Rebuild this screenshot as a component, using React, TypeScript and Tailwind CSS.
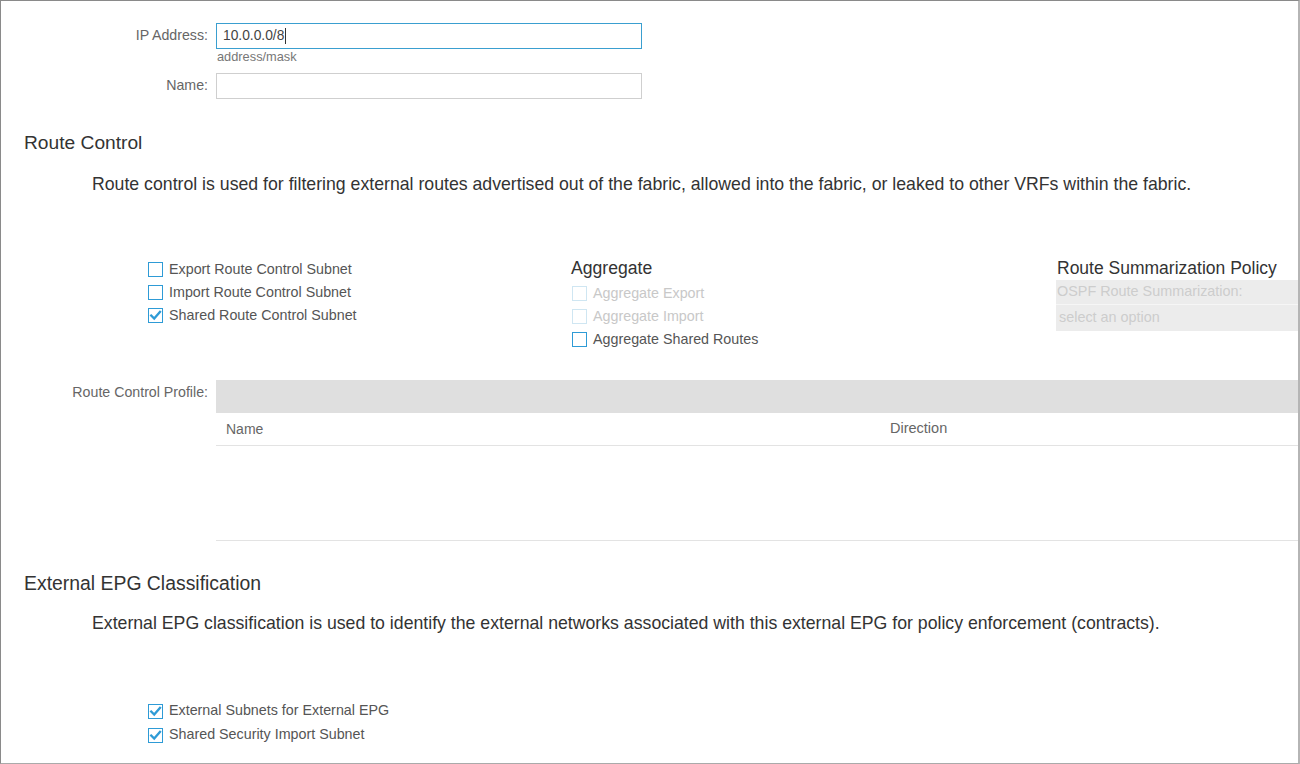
import React from "react";

function Box({ checked, disabled }: { checked?: boolean; disabled?: boolean }) {
  return (
    <span
      className={`inline-flex w-[15px] h-[15px] shrink-0 items-center justify-center border bg-white ${
        disabled ? "border-[#cfe6f2]" : "border-[#2e9bd6]"
      }`}
    >
      {checked && (
        <svg width="13" height="13" viewBox="0 0 13 13">
          <path d="M2.2 6.6 L5.2 9.6 L11 2.8" fill="none" stroke="#2e9bd6" strokeWidth="2.3" strokeLinecap="square" />
        </svg>
      )}
    </span>
  );
}

function Check({ label, checked, disabled, tall }: { label: string; checked?: boolean; disabled?: boolean; tall?: boolean }) {
  return (
    <label className={`flex items-center gap-[6px] ${tall ? "h-[24px]" : "h-[23px]"}`}>
      <Box checked={checked} disabled={disabled} />
      <span className={`text-[14.3px] ${disabled ? "text-[#c8c8c8]" : "text-[#555]"}`}>{label}</span>
    </label>
  );
}

function Field({ label, value, focused }: { label: string; value?: string; focused?: boolean }) {
  return (
    <div className="flex items-center">
      <div className="w-[208px] pr-[1px] text-right text-[14.2px] text-[#666]">{label}</div>
      <div
        className={`ml-[7px] w-[426px] h-[26px] border bg-white flex items-center px-[6px] text-[13.8px] text-[#444] ${
          focused ? "border-[#3a9fd0]" : "border-[#cfcfcf]"
        }`}
      >
        {value}
        {focused && <span className="w-px h-[16px] bg-[#333] ml-[1px]" />}
      </div>
    </div>
  );
}

export default function App() {
  return (
    <div
      className="w-[1300px] h-[764px] bg-white border-t border-l border-b border-t-[#8a8a8a] border-l-[#8a8a8a] border-b-[#aaa] border-r-2 border-r-[#b5b5b5] overflow-hidden"
      style={{ fontFamily: '"Liberation Sans", Arial, sans-serif' }}
    >
      <div className="pt-[22px]">
        <Field label="IP Address:" value="10.0.0.0/8" focused />
        <div className="ml-[216px] mt-[1px] text-[12.8px] text-[#777] h-[14px] leading-[14px]">address/mask</div>
        <div className="mt-[9px]">
          <Field label="Name:" />
        </div>
      </div>

      <h2 className="ml-[23px] mt-[32px] text-[19.2px] text-[#333] leading-[24px]">Route Control</h2>
      <p className="ml-[91px] mt-[18px] text-[17.7px] text-[#333] leading-[22px] whitespace-nowrap">
        Route control is used for filtering external routes advertised out of the fabric, allowed into the fabric, or leaked to other VRFs within the fabric.
      </p>

      <div className="flex mt-[62px] ml-[147px]">
        <div className="w-[423px] pt-[1px]">
          <Check label="Export Route Control Subnet" />
          <Check label="Import Route Control Subnet" />
          <Check label="Shared Route Control Subnet" checked />
        </div>
        <div className="w-[485px]">
          <div className="text-[17.6px] text-[#333] h-[22px] leading-[22px] mb-[3px]">Aggregate</div>
          <div className="ml-[1px]">
            <Check label="Aggregate Export" disabled />
            <Check label="Aggregate Import" disabled />
            <Check label="Aggregate Shared Routes" />
          </div>
        </div>
        <div className="flex-1">
          <div className="text-[17.5px] text-[#333] h-[22px] leading-[22px] ml-[1px] whitespace-nowrap">Route Summarization Policy</div>
          <div className="bg-[#ececec] mt-[1px]">
            <div className="h-[25px] flex items-center px-[1px] text-[14.4px] text-[#cdcdcd] border-b border-[#f6f6f6] whitespace-nowrap">
              OSPF Route Summarization:
            </div>
            <div className="h-[26px] flex items-center px-[3px] text-[14.4px] text-[#cdcdcd]">select an option</div>
          </div>
        </div>
      </div>

      <div className="flex mt-[29px]">
        <div className="w-[208px] pr-[1px] text-right text-[14.2px] text-[#666] pt-[2px] leading-[20px]">Route Control Profile:</div>
        <div className="ml-[7px] flex-1">
          <div className="h-[33px] bg-[#dfdfdf]" />
          <div className="h-[33px] flex items-center border-b border-[#e3e3e3] text-[14px] text-[#666]">
            <div className="w-[674px] pl-[10px]">Name</div>
            <div className="text-[14.5px]">Direction</div>
          </div>
          <div className="h-[95px] border-b border-[#e3e3e3]" />
        </div>
      </div>

      <h2 className="ml-[23px] mt-[30px] text-[19.4px] text-[#333] leading-[24px]">External EPG Classification</h2>
      <p className="ml-[91px] mt-[17px] text-[17.7px] text-[#333] leading-[22px] whitespace-nowrap">
        External EPG classification is used to identify the external networks associated with this external EPG for policy enforcement (contracts).
      </p>

      <div className="ml-[147px] mt-[65px]">
        <Check label="External Subnets for External EPG" checked tall />
        <Check label="Shared Security Import Subnet" checked tall />
      </div>
    </div>
  );
}
